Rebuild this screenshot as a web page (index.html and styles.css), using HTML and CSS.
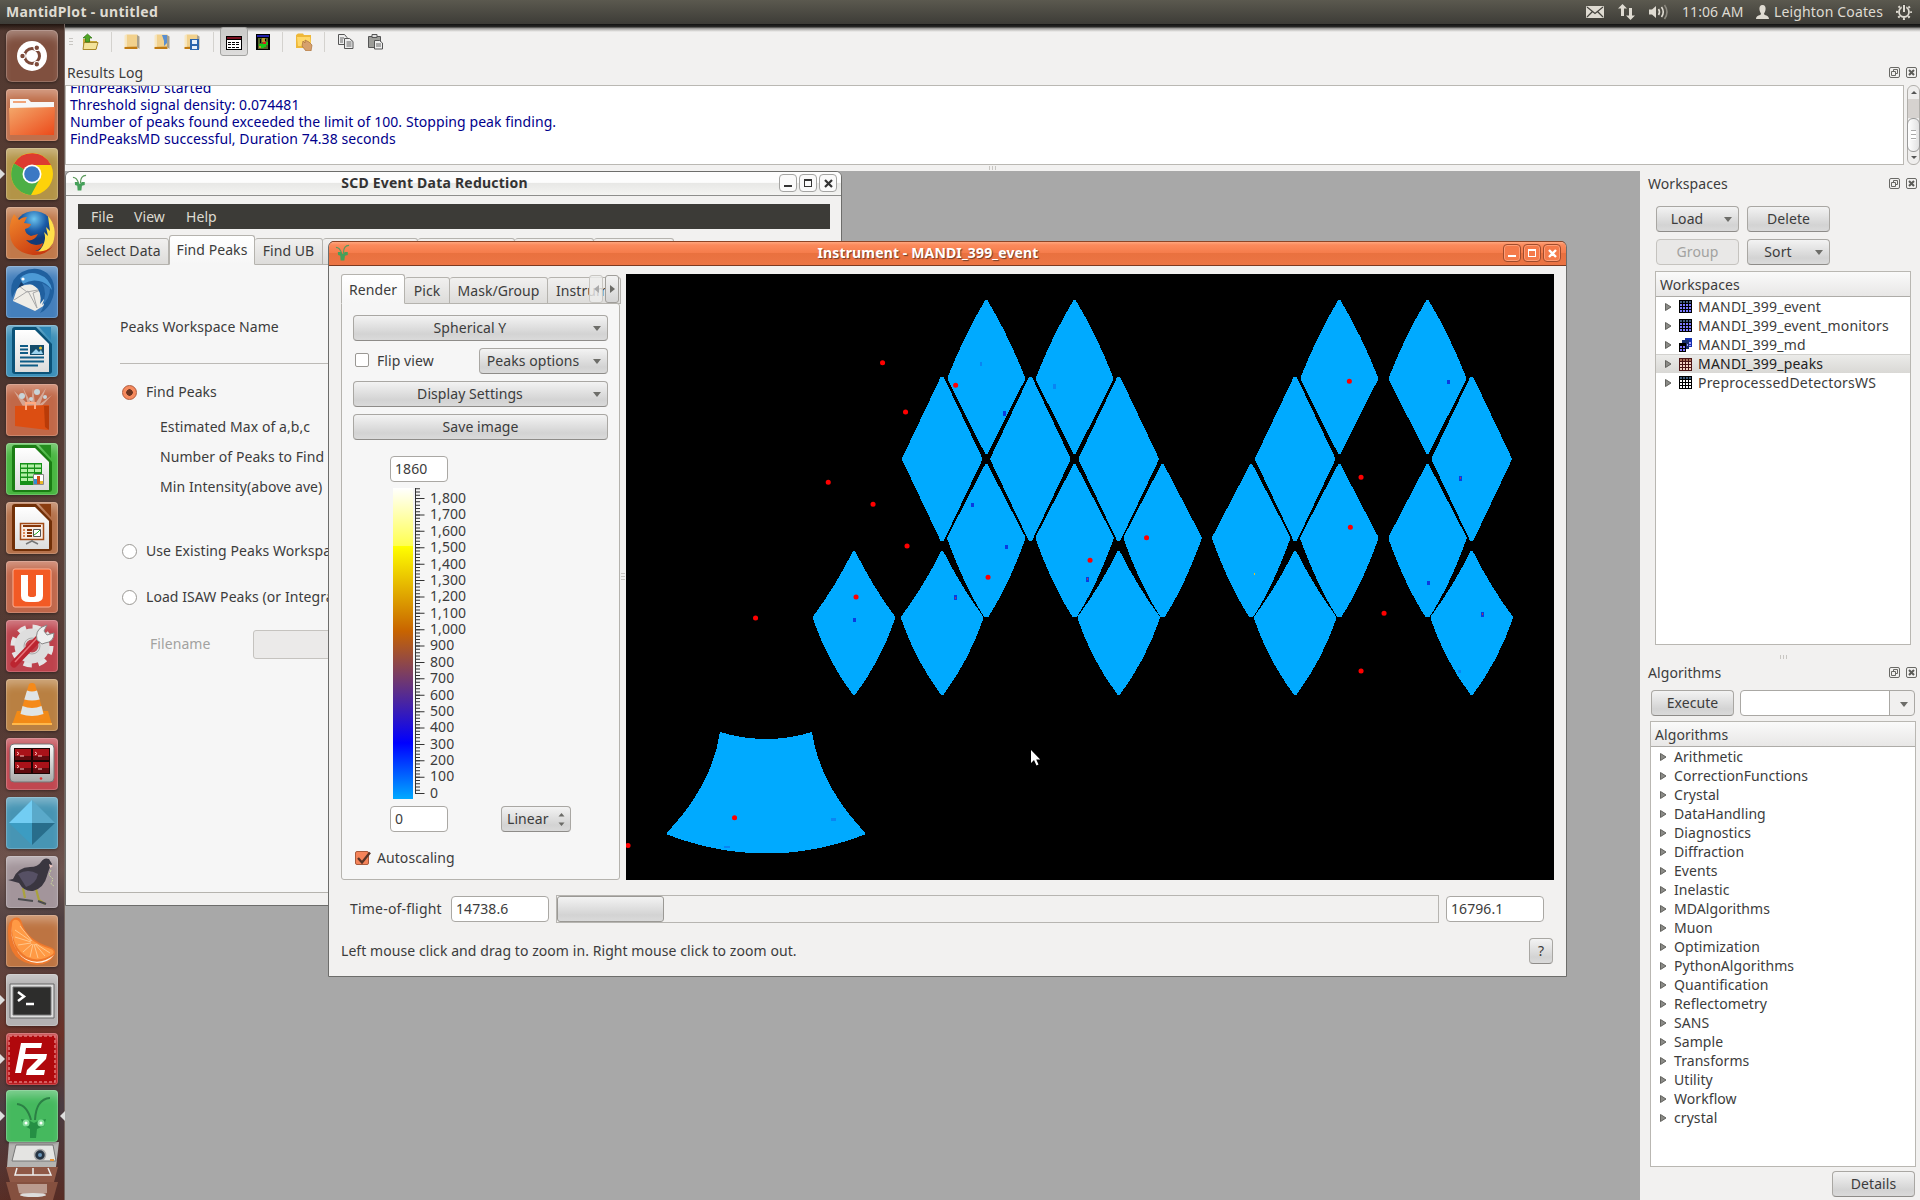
FILE: index.html
```html
<!DOCTYPE html>
<html lang="en">
<head>
<meta charset="utf-8">
<title>MantidPlot - untitled</title>
<link rel="stylesheet" href="styles.css">
</head>
<body>
<svg class="defs" width="0" height="0">
  <defs>
    <symbol id="mantis" viewBox="0 0 16 18"><path d="M1 3Q5 3 7 9M15 0.800Q9 1 9 9" fill="none" stroke="#5c9a5c" stroke-width="1.300"/><path d="M3 8h3l2.300 2 2.300-2h3v3l-3 1-.6 5h-4l-.4-5-2.300-1z" fill="#45a05a"/></symbol>
    <symbol id="float" viewBox="0 0 11 11"><rect x=".5" y=".5" width="10" height="10" rx="1.500" fill="none" stroke="#696965"/><path d="M4.500 4.500v-2h4v4h-2M2.500 4.500h4v4h-4z" fill="none" stroke="#696965"/></symbol>
    <symbol id="close" viewBox="0 0 11 11"><rect x=".5" y=".5" width="10" height="10" rx="1.500" fill="none" stroke="#696965"/><path d="M3 3l5 5M8 3l-5 5" stroke="#5b5b57" stroke-width="2"/></symbol>
    <symbol id="tri" viewBox="0 0 7 8"><path d="M.5.500L6 4 .5 7.500z" fill="#8b8b87" stroke="#62625e"/></symbol>
    <symbol id="grid" viewBox="0 0 13 13"><path d="M0 0h13v13H0z"/><path d="M1 1h2v2H1zM4 1h2v2H4zM7 1h2v2H7zM10 1h2v2h-2z" fill="#445f80"/><path d="M1 4h2v2H1zM4 4h2v2H4zM7 4h2v2H7zM10 4h2v2h-2zM1 7h2v2H1zM4 7h2v2H4zM7 7h2v2H7zM10 7h2v2h-2zM1 10h2v2H1zM4 10h2v2H4zM7 10h2v2H7zM10 10h2v2h-2z" fill="currentColor"/></symbol>
    <symbol id="gridred" viewBox="0 0 13 13"><path d="M0 0h13v13H0z" fill="#4a1414"/><path d="M1 1h2v2H1zM4 1h2v2H4zM7 1h2v2H7zM10 1h2v2h-2z" fill="#a87058"/><path d="M1 4h2v2H1zM4 4h2v2H4zM7 4h2v2H7zM10 4h2v2h-2zM1 7h2v2H1zM4 7h2v2H4zM7 7h2v2H7zM10 7h2v2h-2zM1 10h2v2H1zM4 10h2v2H4zM7 10h2v2H7zM10 10h2v2h-2z" fill="#f5d5c5"/></symbol>
    <symbol id="book" viewBox="0 0 18 18"><path d="M3.500 1.500h11v12l-11 1z" fill="#f2d18c"/><path d="M1.500 2.500l2-1.500v13l-2 .5z" fill="#f8e8c0"/><path d="M1.500 14l13-.5v2.500h-13z" fill="#c07a12"/><path d="M14 2l2.500 1.500V16L14 14z" fill="#a8a08c"/></symbol>
    <linearGradient id="docw" x2="0" y2="1"><stop stop-color="#fff"/><stop offset="1" stop-color="#dcdcdc"/></linearGradient>
    <linearGradient id="orange" x2="1" y2="1"><stop stop-color="#f3a86b"/><stop offset="1" stop-color="#ec4a1a"/></linearGradient>
    <linearGradient id="silver" x2="0" y2="1"><stop stop-color="#fafafa"/><stop offset="1" stop-color="#a9a9a9"/></linearGradient>
    <linearGradient id="fox" x2=".7" y2="1"><stop stop-color="#f28a2c"/><stop offset="1" stop-color="#c8380f"/></linearGradient>
    <radialGradient id="globe" cx=".5" cy=".2"><stop stop-color="#6cc4ee"/><stop offset=".6" stop-color="#1c5da8"/><stop offset="1" stop-color="#123a78"/></radialGradient>
  </defs>
</svg>

<div class="desktop">
  <header class="panel">
    <span class="panel-title">MantidPlot - untitled</span>
    <div class="indicators">
      <svg class="i-mail" width="18" height="12" viewBox="0 0 18 12"><rect width="18" height="12" rx="1" fill="#dfdbd2"/><path d="M1 1l8 6.500L17 1M1 11l5.500-5.500M17 11l-5.500-5.500" fill="none" stroke="#45443e" stroke-width="1.200"/></svg>
      <svg class="i-net" width="17" height="16" viewBox="0 0 17 16"><path d="M4.500 0L9 4.500H6V12H3V4.500H0zM12.500 16L8 11.500h3V4h3v7.500h3z" fill="#dfdbd2"/></svg>
      <svg class="i-vol" width="20" height="16" viewBox="0 0 20 16"><path d="M0 5.500h3L7 2v12l-4-3.500H0z" fill="#dfdbd2"/><path d="M9.500 5q2 3 0 6M12.500 3q3.500 5 0 10" fill="none" stroke="#dfdbd2" stroke-width="1.600"/><path d="M15.500 1q5 7 0 14" fill="none" stroke="#8b887f" stroke-width="1.600"/></svg>
      <span class="clock">11:06 AM</span>
      <svg class="i-user" width="13" height="14" viewBox="0 0 13 14"><path d="M6.500 0C9 0 10 2 9.500 5 9.200 7 8 8 8 9c0 1.500 5 1 5 5H0c0-4 5-3.500 5-5C5 8 3.800 7 3.500 5 3 2 4 0 6.500 0z" fill="#dfdbd2"/></svg>
      <span class="user">Leighton Coates</span>
      <svg class="i-gear" width="16" height="16" viewBox="0 0 16 16"><circle cx="8" cy="8" r="5" fill="none" stroke="#dfdbd2" stroke-width="1.800"/><circle cx="8" cy="8" r="7" fill="none" stroke="#dfdbd2" stroke-width="2" stroke-dasharray="2 3.500" stroke-dashoffset="1"/><path d="M5.800 0h4.400v7H5.800z" fill="#4a4942"/><path d="M7 1h2v7H7z" fill="#dfdbd2"/></svg>
    </div>
  </header>

  <div class="body">
    <nav class="launcher">
      <div class="tile t-ubuntu"><svg viewBox="0 0 52 52"><circle cx="26" cy="26" r="15" fill="#fff"/><circle cx="26" cy="26" r="7.500" fill="none" stroke="#7c4a3a" stroke-width="3"/><g fill="#7c4a3a" stroke="#fff" stroke-width="1.200"><circle cx="16.500" cy="26" r="2.800"/><circle cx="30.800" cy="17.700" r="2.800"/><circle cx="30.800" cy="34.300" r="2.800"/></g></svg></div>
      <div class="tile t-files"><svg viewBox="0 0 52 52"><path d="M4 10h18l3 3h23v7H4z" fill="#f7f7f7"/><path d="M7 12h13v2H7z" fill="#f0a478"/><path d="M3 19l46-1-1 28H4z" fill="url(#orange)"/></svg></div>
      <div class="tile t-chrome"><svg viewBox="0 0 52 52"><circle cx="26" cy="26" r="21" fill="#fdd20a"/><path d="M26 26L8 15.500A21 21 0 0 1 45 17H26z" fill="#dd3a30"/><path d="M8 15.500A21 21 0 0 0 25 47l9-16.500-8-4.500z" fill="#4caf45"/><circle cx="26" cy="26" r="9.500" fill="#fff"/><circle cx="26" cy="26" r="7.800" fill="#3b78c4"/></svg><i class="pip"></i></div>
      <div class="tile t-firefox"><svg viewBox="0 0 52 52"><circle cx="28" cy="24" r="20" fill="url(#globe)"/><path d="M42 9Q52 20 47 36 40 47 30 47 42 36 38 25l4 4-2-9 4 4z" fill="#ffdf4a"/><path d="M8 7l5 6q3-3 8-3l-3 6 7 1q-1 4-6 5 0 5 6 7l7-2q-4 8-12 6 8 8 17 3-1 6-8 8 10 2 18-5-8 10-20 9Q10 46 5 33 1 19 8 7z" fill="url(#fox)"/></svg></div>
      <div class="tile t-bird"><svg viewBox="0 0 52 52"><path d="M12 20l-5 15 22 10 15-9-9-19z" fill="#efede7"/><path d="M8 34l14-9 9 17-4-15 10-4-16 3-8-6" fill="none" stroke="#a8a8a8"/><path d="M6 32Q2 14 16 6 30-1 41 7q10 9 6 24-4 12-13 16 5-7 4-14l-4 5q2-9-2-15-6-6-13-5-9 3-13 14z" fill="#20609f"/><path d="M14 12q8-7 18-4 12 4 14 16-6-8-13-9-8-2-16 3z" fill="#4c9ad6"/><path d="M36 17q6 10 0 22 8-6 8-17z" fill="#3578b8"/><circle cx="17" cy="13" r="1.600" fill="#fff"/><path d="M12 22l3-6 3 3z" fill="#163b66"/></svg></div>
      <div class="tile t-writer"><svg viewBox="0 0 52 52"><path d="M6 5q0-3 3-3h21l16 17v27q0 3-3 3H9q-3 0-3-3z" fill="#0b5278"/><path d="M33 2h12v13z" fill="#2e86b5"/><path d="M9 5h20l14 14v28H9z" fill="url(#docw)"/><path d="M14 21h8M14 24.500h8M14 28h8M14 32.500h24M14 36.500h24M14 40.500h18" stroke="#0f5c86" stroke-width="2"/><path d="M24 20h14v10H24z" fill="#134c6b"/><path d="M25 29l5-5 3 3 2-2 2 4z" fill="#9cd2ee"/><circle cx="34.500" cy="23" r="1.500" fill="#ecc234"/></svg></div>
      <div class="tile t-soft"><svg viewBox="0 0 52 52"><path d="M8 7l14 13L17 4l8 15 2-15 2 16L40 4l-6 16 12-9-12 13H18z" fill="#e4cfc4" opacity=".6"/><g fill="#c8d4d8"><circle cx="16" cy="12" r="3"/><circle cx="31" cy="8" r="3"/><circle cx="25" cy="15" r="2"/><circle cx="39" cy="13" r="2"/></g><path d="M9 22l34-1-1 25-33-4z" fill="#dc4e12"/><path d="M38 22h5v24l-4-3z" fill="#b93b08"/><path d="M20 26v-7h9v6" fill="none" stroke="#ffa880" stroke-width="2"/></svg></div>
      <div class="tile t-calc"><svg viewBox="0 0 52 52"><path d="M6 5q0-3 3-3h21l16 17v27q0 3-3 3H9q-3 0-3-3z" fill="#1b7d14"/><path d="M33 2h12v13z" fill="#258d1e"/><path d="M9 5h20l14 14v28H9z" fill="url(#docw)"/><path d="M14 20h22v22H14z" fill="#159018"/><path d="M15 21.500h6v3h-6zm7 0h6v3h-6zm7 0h6v3h-6zM15 26h6v3h-6zm7 0h6v3h-6zm7 0h6v3h-6zM15 30.500h6v3h-6zm7 0h6v3h-6zM15 35h6v3h-6zm7 0h6v3h-6z" fill="#b3efa6"/><path d="M27.500 31.500h10v10h-10z" fill="#fff" stroke="#888"/><path d="M28 36h3v5h-3z" fill="#318bd3"/><path d="M31 33h3v8h-3z" fill="#cf4f19"/><path d="M34 38h3v3h-3z" fill="#e8b92a"/></svg></div>
      <div class="tile t-impress"><svg viewBox="0 0 52 52"><path d="M6 5q0-3 3-3h21l16 17v27q0 3-3 3H9q-3 0-3-3z" fill="#713008"/><path d="M33 2h12v13z" fill="#8b3d10"/><path d="M9 5h20l14 14v28H9z" fill="url(#docw)"/><path d="M14.500 21.500h23v16h-23z" fill="#f8ece4" stroke="#a24a16" stroke-width="1.500"/><path d="M17 24h18M21 28h5M21 31h5M21 34h5" stroke="#873608" stroke-width="2"/><path d="M17 28h2M17 31h2M17 34h2" stroke="#dc8a5a" stroke-width="2"/><path d="M27.500 27.500h7v7h-7z" fill="#fff" stroke="#555"/><path d="M28 33l3-2 3-3" stroke="#2a2" fill="none"/><path d="M26 38v1l-6 3M26 39l6 3" stroke="#777" stroke-width="1.500" fill="none"/></svg></div>
      <div class="tile t-one"><svg viewBox="0 0 52 52"><rect x="7" y="8" width="38" height="38" rx="2" fill="#f25a25" stroke="#ffb093"/><path d="M15 14h7v20q0 2 4 2t4-2V14h7v21q0 6-8 6h-6q-8 0-8-6zM22 14v5l-4 2z" fill="#fff"/></svg></div>
      <div class="tile t-set"><svg viewBox="0 0 52 52"><circle cx="26" cy="26" r="18.500" fill="none" stroke="#e4e4e4" stroke-width="6" stroke-dasharray="8 6.530"/><circle cx="26" cy="26" r="12" fill="none" stroke="#dedede" stroke-width="11"/><circle cx="26" cy="26" r="8" fill="none" stroke="#aaa"/><path d="M8 44L33 18" stroke="#bc2530" stroke-width="7" stroke-linecap="round"/><path d="M9 42L32 17" stroke="#e8747a" stroke-width="1.500"/><path d="M31 20q-2-9 5-13l5-2-3 6 3 4 7-2q0 9-9 10l-3 1z" fill="#eee" stroke="#888"/></svg></div>
      <div class="tile t-vlc"><svg viewBox="0 0 52 52"><path d="M11 32h31l4 14H6z" fill="#f28a16"/><path d="M23 5q3-2 6 0l10 34q-13 6-26 0z" fill="#f58a1a"/><path d="M21 11.500q5 2 10 0l2.700 9q-7.700 2-15.400 0zM16.500 27q9.500 4 19 0l2 8q-11.500 4-23 0z" fill="#dfe4e6"/><path d="M6 44h40v2H6z" fill="#ffb84a"/></svg></div>
      <div class="tile t-term"><svg viewBox="0 0 52 52"><rect x="4" y="6" width="44" height="38" rx="4" fill="url(#silver)" stroke="#777"/><path d="M8 10h36v26H8z" fill="#1a0505"/><path d="M9 11h16v11H9zM27 11h16v11H27zM9 24h16v11H9zM27 24h16v11H27z" fill="#a91219"/><path d="M9 18h16v4H9zM27 18h16v4H27zM9 30h16v5H9zM27 30h16v5H27z" fill="#600a0e"/><path d="M11 14l2 1.500-2 1.500M14 18h4M29 14l2 1.500-2 1.500M32 18h4M11 27l2 1.500-2 1.500M14 31h4M29 27l2 1.500-2 1.500M32 31h4" fill="none" stroke="#ffc0c0"/><circle cx="35" cy="40.500" r="1.300" fill="#e03030"/></svg></div>
      <div class="tile t-octa"><svg viewBox="0 0 52 52"><path d="M26 3v23H3z" fill="#72cdf3"/><path d="M26 3l23 23H26z" fill="#5aa9ca"/><path d="M3 26h23v22z" fill="#3c9cc2"/><path d="M26 26h23L26 48z" fill="#286d8b"/></svg></div>
      <div class="tile t-coot"><svg viewBox="0 0 52 52"><path d="M17 32l2 10m11-9l3 11 6 4" stroke="#aaa23d" stroke-width="2.200" fill="none"/><path d="M12 43l15 2m5 0l8 3" stroke="#4c4c50" stroke-width="2"/><path d="M2 24l5-1Q12 11 24 11q8 0 11-5 3-5 8-3l3 5q-3 4-5 12-3 12-14 15-9 1-14-8z" fill="#3a3640"/><path d="M12 18q10-6 20 0-2 10-12 13z" fill="#565064"/><path d="M43 8l4 2-3 2z" fill="#f0c8c0"/><path d="M45 14l-2 5 4 4-2 5 3 2" stroke="#c6d19b" stroke-dasharray="2 1" fill="none"/></svg></div>
      <div class="tile t-clem"><svg viewBox="0 0 52 52"><path d="M8 3q6-2 8 5 5 17 28 24 6 2 5 7-5 11-18 11Q2 48 2 16 2 6 8 3z" fill="#ee782c"/><path d="M5 10q0 26 15 34 14 7 28-4-6 8-17 8Q6 46 5 10z" fill="#fff0de"/><path d="M8 5q5-1 7 5 6 17 30 24 4 2 2 5-13 9-26 3Q5 32 6 9q0-3 2-4z" fill="#ff9a45"/><path d="M26 26L14 11M25 26L9 15M25 27L9 22M25 28l-13 2M26 29l-9 8M27 29l-3 13M28 29l4 14M29 29l10 12M30 29l14 9" stroke="#ffc78c" stroke-width="1"/></svg></div>
      <div class="tile t-xterm"><svg viewBox="0 0 52 52"><path d="M4 10h44v34H4z" fill="#dedede" stroke="#666"/><path d="M7 13h38v28H7z" fill="#2d2d2c" stroke="#777"/><path d="M12 18l6 4.500-6 4.500M20 30h8" fill="none" stroke="#fff" stroke-width="2.500"/></svg><i class="pip"></i></div>
      <div class="tile t-fz"><svg viewBox="0 0 52 52"><rect x="3" y="3" width="46" height="46" fill="#b0080c" stroke="#df7777" stroke-dasharray="3 2" stroke-width="1.500"/><path d="M15 10h21l-1 5H20l-1 6h9l-1 5h-9l-3 14H9zM23 21h18l-1 5-11 11h10l-1 5H20l1-5 11-11H22z" fill="#fff"/></svg><i class="pip"></i></div>
      <div class="tile t-mantid"><svg viewBox="0 0 52 52"><path d="M11 14q10 1 14 16M44 8q-14 1-15 22" fill="none" stroke="#2b8045" stroke-width="2"/><path d="M15 29l9 2 4 2 4-2 8-2-2 7-7 3-1 9h-6v-9l-7-4z" fill="#258f44"/><circle cx="20" cy="33" r="3.500" fill="#83dd98"/><circle cx="35" cy="33" r="3.500" fill="#83dd98"/><circle cx="20" cy="33" r="1.500" fill="#fff"/><circle cx="35" cy="33" r="1.500" fill="#fff"/></svg><i class="pip"></i><i class="pip focus"></i></div>
      <svg class="stack" width="56" height="58" viewBox="0 0 56 58"><path d="M4 0h50l-3 25H2z" fill="#b5b4b2"/><path d="M11 3h37l3 16H7z" fill="#e4e4e2" stroke="#777"/><circle cx="35" cy="13" r="5.500" fill="#263443" stroke="#aaa" stroke-width="1.500"/><circle cx="35" cy="13" r="2" fill="#6894b9"/><path d="M45 17h4v2h-4z" fill="#e89534"/><path d="M1 25h52l-4 15H5z" fill="#8f5846"/><path d="M12 26l-2 7h36l-3-7M28 26v7" fill="none" stroke="#eee" stroke-width="1.500"/><path d="M1 40h52l-5 18H6z" fill="#85503f"/><path d="M12 42h30v9q-15 5-28 0z" fill="#ba9b8f"/><ellipse cx="28" cy="53" rx="13" ry="2" fill="#ddd"/></svg>
    </nav>

    <main class="app">
      <div class="toolbar">
        <i class="grip"></i>
        <svg class="tb tb-open" width="18" height="18" viewBox="0 0 18 18"><path d="M2 6h6l1.500 2H16v8H2z" fill="#c9a93c"/><path d="M3 9.500h14l-2 7H2z" fill="#f3e39a" stroke="#a98a2c"/><path d="M6.500 1L11 5H8.500v4H4.500V5H2z" fill="#4fa524" stroke="#2f7412" stroke-width=".7"/></svg>
        <i class="sep"></i>
        <svg class="tb tb-b1" width="18" height="18"><use href="#book"/></svg>
        <svg class="tb tb-b2" width="18" height="18"><use href="#book"/><path d="M9 2h5v8l-3 3v-5z" fill="#5a8fd0"/></svg>
        <svg class="tb tb-b3" width="18" height="18"><use href="#book"/><path d="M7 6h9v11H7z" fill="#2b64ad"/><path d="M9 7h5v4H9zM9 13h5v3H9z" fill="#e7effa"/></svg>
        <i class="sep"></i>
        <span class="tb-active"><svg width="16" height="14" viewBox="0 0 16 14" shape-rendering="crispEdges"><path d="M0 0h16v14H0z"/><path d="M1 1h14v2H1z" fill="#7a1020"/><path d="M1 4h14v9H1z" fill="#fff"/><path d="M2 6.500h12M2 8.500h12M2 11.500h12" stroke="#000" stroke-dasharray="3 1"/></svg></span>
        <svg class="tb-img" width="14" height="16" viewBox="0 0 14 16" shape-rendering="crispEdges"><path d="M0 0h14v16H0z"/><path d="M1 1h12v2H1z" fill="#2020a8"/><path d="M2 4h10v11H2z" fill="#56642a"/><path d="M3 10h4V8h5v3h-2v2H8v1H4v-1H3z" fill="#18c818"/><path d="M6 4h3v4H6zM3 12h2v2H3z" fill="#b8982c"/><path d="M7 8h3v2H7z" fill="#d82020"/><path d="M4 5h1v4H4zM9 5h1v2H9z"/></svg>
        <i class="sep"></i>
        <svg class="tb tb-hand" width="18" height="18" viewBox="0 0 18 18"><path d="M1 2l2-1.500h5L9 2h7v13H1z" fill="#eeb83a"/><path d="M2 4h13l1 9H3z" fill="#ffd869"/><path d="M8 8l2 2V7l4 2 3 3-1 6h-5l-4-5z" fill="#d6a06c" stroke="#a8713e" stroke-width=".7"/></svg>
        <i class="sep"></i>
        <svg class="tb tb-copy" width="16" height="15" viewBox="0 0 16 15"><path d="M.5.500h6l2.500 3v7H.5z" fill="#eee" stroke="#555"/><path d="M6.500 4.500h5l3.500 3v7H6.500z" fill="#eee" stroke="#555"/><path d="M2 4h4M2 6h3M2 8h3M8.500 8h5M8.500 10h5M8.500 12h5" stroke="#666"/></svg>
        <svg class="tb tb-paste" width="16" height="16" viewBox="0 0 16 16"><path d="M.5 2.500h12v11H.5z" fill="#9c9c98" stroke="#555"/><path d="M4 .5h5v3H4z" fill="#ddd" stroke="#555"/><path d="M6.500 6.500h5l3 2.500v6h-8z" fill="#eee" stroke="#555"/><path d="M8 10h5M8 12h5" stroke="#666"/></svg>
      </div>

      <div class="dock-title log-title"><span>Results Log</span><svg width="11" height="11"><use href="#float"/></svg><svg width="11" height="11"><use href="#close"/></svg></div>
      <div class="log-row">
        <div class="log"><p>FindPeaksMD started</p><p>Threshold signal density: 0.074481</p><p>Number of peaks found exceeded the limit of 100. Stopping peak finding.</p><p>FindPeaksMD successful, Duration 74.38 seconds</p></div>
        <div class="scroll"><i class="up"></i><i class="trough"></i><i class="thumb"></i><i class="down"></i></div>
      </div>
      <div class="split-h"><i class="dots-h"></i></div>

      <div class="work">
        <div class="mdi">
          <section class="win scd">
            <div class="titlebar"><svg class="m" width="15" height="18"><use href="#mantis"/></svg><b class="wt">SCD Event Data Reduction</b><span class="wb"><i class="min"></i></span><span class="wb"><i class="max"></i></span><span class="wb"><svg width="9" height="9" viewBox="0 0 9 9"><path d="M1 1l7 7M8 1L1 8" stroke="currentColor" stroke-width="2.200"/></svg></span></div>
            <div class="menubar"><span>File</span><span>View</span><span>Help</span></div>
            <div class="tabs scd-tabs"><span class="tab w1">Select Data</span><span class="tab on w2">Find Peaks</span><span class="tab w3">Find UB</span><span class="tab w4"></span><span class="tab w5"></span><span class="tab w6"></span><span class="tab w7"></span></div>
            <div class="page scd-page">
              <div class="peaks-name">Peaks Workspace Name</div>
              <div class="row r1"><i class="radio on"></i>Find Peaks</div>
              <div class="row ind">Estimated Max of a,b,c</div>
              <div class="row ind">Number of Peaks to Find</div>
              <div class="row ind">Min Intensity(above ave)</div>
              <div class="row r2"><i class="radio"></i>Use Existing Peaks Workspace</div>
              <div class="row r3"><i class="radio"></i>Load ISAW Peaks (or Integrated)</div>
              <div class="row r4"><span>Filename</span><i class="disabled-field"></i></div>
            </div>
          </section>

          <section class="win inst">
            <div class="titlebar hot"><svg class="m" width="15" height="18"><use href="#mantis"/></svg><b class="wt">Instrument - MANDI_399_event</b><span class="wb"><i class="min"></i></span><span class="wb"><i class="max"></i></span><span class="wb"><svg width="9" height="9" viewBox="0 0 9 9"><path d="M1 1l7 7M8 1L1 8" stroke="currentColor" stroke-width="2.400"/></svg></span></div>
            <div class="inst-main">
              <div class="controls">
                <div class="tabs inst-tabs"><span class="tab on x1">Render</span><span class="tab x2">Pick</span><span class="tab x3">Mask/Group</span><span class="tab x4">Instrum</span><span class="arrows"><b class="arr off"><i></i></b><b class="arr"><i></i></b></span></div>
                <div class="page render">
                  <div class="btn menu wide">Spherical Y</div>
                  <div class="flip"><i class="check"></i><span>Flip view</span><div class="btn menu">Peaks options</div></div>
                  <div class="btn menu wide">Display Settings</div>
                  <div class="btn wide">Save image</div>
                  <div class="field f-max">1860</div>
                  <div class="scale">
                    <i class="colorbar"></i>
                    <svg width="12" height="311" viewBox="0 0 12 311"><path d="M2.500 0v306" stroke="#333"/><path d="M4.500 306.100V0" stroke="#333" stroke-width="5" stroke-dasharray="1 2.278"/><path d="M7 306.100V0" stroke="#333" stroke-width="9" stroke-dasharray="1 15.390"/></svg>
                    <div class="nums"><span>1,800</span><span>1,700</span><span>1,600</span><span>1,500</span><span>1,400</span><span>1,300</span><span>1,200</span><span>1,100</span><span>1,000</span><span>900</span><span>800</span><span>700</span><span>600</span><span>500</span><span>400</span><span>300</span><span>200</span><span>100</span><span>0</span></div>
                  </div>
                  <div class="lowrow"><div class="field">0</div><div class="btn linear">Linear<svg width="7" height="13" viewBox="0 0 7 13"><path d="M.5 3.500L3.500 0l3 3.500zM.5 9.500l3 3.500 3-3.500z" fill="#6b6b67"/></svg></div></div>
                  <div class="auto"><i class="check on"><svg width="18" height="16" viewBox="0 0 18 16"><path d="M3 7l4 4.500 8-10" fill="none" stroke="#5a3426" stroke-width="2.400"/></svg></i><span>Autoscaling</span></div>
                </div>
              </div>
              <div class="split-v"><i class="dots-v"></i></div>
              <svg class="view" width="928" height="606" viewBox="626 274 928 606" shape-rendering="crispEdges">
                <defs>
                  <path id="ra" d="M-1 0h2Q22 35 38.500 77V80L1 154h-2L-38.500 80V77Q-22 35-1 0z"/>
                  <path id="rb" d="M-1.500 0h3L40 81V83L1.500 164h-3L-40 83V81z"/>
                  <path id="rc" d="M-1 0h2L39 73V75Q22 122 2 153h-4Q-22 122-39 75V73z"/>
                  <path id="rd" d="M-1 0h2Q19 36 41 65.500V68Q27 109 1 144h-2Q-27 109-41 68V65.500Q-19 36-1 0z"/>
                </defs>
                <path d="M626 274h928v606H626z"/>
                <g fill="#0af">
                  <use href="#ra" x="986.300" y="300"/><use href="#ra" x="1074.600" y="300"/><use href="#ra" x="1339.300" y="300"/><use href="#ra" x="1427.500" y="300"/>
                  <use href="#rb" x="942.200" y="377"/><use href="#rb" x="1030.400" y="377"/><use href="#rb" x="1118.700" y="377"/><use href="#rb" x="1295.200" y="377"/><use href="#rb" x="1471.700" y="377"/>
                  <use href="#rc" x="986.300" y="464"/><use href="#rc" x="1074.600" y="464"/><use href="#rc" x="1162.600" y="464"/><use href="#rc" x="1251.200" y="464"/><use href="#rc" x="1339.300" y="464"/><use href="#rc" x="1427.500" y="464"/>
                  <use href="#rd" x="854" y="551"/><use href="#rd" x="942.200" y="551"/><use href="#rd" x="1118.700" y="551"/><use href="#rd" x="1295.200" y="551"/><use href="#rd" x="1471.700" y="551"/>
                  <path d="M720 732q46 14 92 0Q820 785 865 832.500v2q-98 38-198 0v-2Q712 785 720 732z"/>
                </g>
                <g fill="none" stroke-width="2.500">
                  <path stroke="#0a84f2" d="M981 362v4M1054.500 384v5M1459.500 670v3M831 819.500h5M724 847h6"/>
                  <path stroke="#0a3be0" d="M1004.500 411v5M972.500 503v4M1006.500 545v4M1087.500 577v5M955.500 595v5M854.500 618v4M1448.500 380v4M1460.500 476v5M1428.500 581v4M1482.500 612v5"/>
                  <path stroke="#a04050" stroke-width="1" d="M955.500 597v2M1087.500 578v2M1460.500 477v2M1482.500 613v2"/>
                  <path stroke="#f2c21a" stroke-width="1.500" d="M1254.500 573v2"/>
                </g>
                <g stroke="red" stroke-width="5" stroke-linecap="round" shape-rendering="auto">
                  <path d="M882.500 362.700h.1M905.500 412h.1M955.600 385.300h.1M828.200 482.300h.1M873 504.300h.1M907 546h.1M856 597h.1M755.500 618h.1M988 577.300h.1M1090 560.300h.1M1146.500 537.700h.1M1349.300 381.300h.1M1361 477.300h.1M1350.300 527.300h.1M1384 613.300h.1M1361 671h.1M734.500 817.700h.1M628 845.500h.1"/>
                </g>
                <path d="M1031 750v13l3-3 2.500 5.500 2-1-2.300-5h4z" fill="#fff" shape-rendering="auto"/>
              </svg>
            </div>
            <div class="tof"><span>Time-of-flight</span><div class="field">14738.6</div><div class="slider"><i></i></div><div class="field">16796.1</div></div>
            <div class="hint"><span>Left mouse click and drag to zoom in. Right mouse click to zoom out.</span><div class="btn help">?</div></div>
          </section>
        </div>

        <aside class="docks">
          <div class="dock-title"><span>Workspaces</span><svg width="11" height="11"><use href="#float"/></svg><svg width="11" height="11"><use href="#close"/></svg></div>
          <div class="wsbtns"><div class="btn menu">Load</div><div class="btn">Delete</div><div class="btn dis">Group</div><div class="btn menu">Sort</div></div>
          <div class="tree ws">
            <div class="th">Workspaces</div>
            <div class="tr"><svg class="tg" width="7" height="8"><use href="#tri"/></svg><svg class="gi blue" width="13" height="13"><use href="#grid"/></svg>MANDI_399_event</div>
            <div class="tr"><svg class="tg" width="7" height="8"><use href="#tri"/></svg><svg class="gi blue" width="13" height="13"><use href="#grid"/></svg>MANDI_399_event_monitors</div>
            <div class="tr"><svg class="tg" width="7" height="8"><use href="#tri"/></svg><svg class="gi" width="13" height="14" viewBox="0 0 13 14"><path d="M6 0h7v9H6z" fill="#1530b0"/><path d="M7 4h2v2H7zM10 4h2v2h-2zM10 7h2v1h-2z" fill="#a8a0ff"/><path d="M3 2h7v9H3z" fill="#1a3070"/><path d="M0 5h7v9H0z"/><path d="M1 8h2v2H1zM4 8h2v2H4zM1 11h2v2H1zM4 11h2v2H4z" fill="#8078ff"/><path d="M8 6h1v2H8z" fill="#a8a0ff"/></svg>MANDI_399_md</div>
            <div class="tr sel"><svg class="tg" width="7" height="8"><use href="#tri"/></svg><svg class="gi" width="13" height="13"><use href="#gridred"/></svg>MANDI_399_peaks</div>
            <div class="tr"><svg class="tg" width="7" height="8"><use href="#tri"/></svg><svg class="gi white" width="13" height="13"><use href="#grid"/></svg>PreprocessedDetectorsWS</div>
          </div>
          <div class="dock-split"><i class="dots-h"></i></div>
          <div class="dock-title alg-title"><span>Algorithms</span><svg width="11" height="11"><use href="#float"/></svg><svg width="11" height="11"><use href="#close"/></svg></div>
          <div class="exec"><div class="btn">Execute</div><div class="combo"><i></i></div></div>
          <div class="tree alg">
            <div class="th">Algorithms</div>
            <div class="tr"><svg class="tg" width="7" height="8"><use href="#tri"/></svg>Arithmetic</div>
            <div class="tr"><svg class="tg" width="7" height="8"><use href="#tri"/></svg>CorrectionFunctions</div>
            <div class="tr"><svg class="tg" width="7" height="8"><use href="#tri"/></svg>Crystal</div>
            <div class="tr"><svg class="tg" width="7" height="8"><use href="#tri"/></svg>DataHandling</div>
            <div class="tr"><svg class="tg" width="7" height="8"><use href="#tri"/></svg>Diagnostics</div>
            <div class="tr"><svg class="tg" width="7" height="8"><use href="#tri"/></svg>Diffraction</div>
            <div class="tr"><svg class="tg" width="7" height="8"><use href="#tri"/></svg>Events</div>
            <div class="tr"><svg class="tg" width="7" height="8"><use href="#tri"/></svg>Inelastic</div>
            <div class="tr"><svg class="tg" width="7" height="8"><use href="#tri"/></svg>MDAlgorithms</div>
            <div class="tr"><svg class="tg" width="7" height="8"><use href="#tri"/></svg>Muon</div>
            <div class="tr"><svg class="tg" width="7" height="8"><use href="#tri"/></svg>Optimization</div>
            <div class="tr"><svg class="tg" width="7" height="8"><use href="#tri"/></svg>PythonAlgorithms</div>
            <div class="tr"><svg class="tg" width="7" height="8"><use href="#tri"/></svg>Quantification</div>
            <div class="tr"><svg class="tg" width="7" height="8"><use href="#tri"/></svg>Reflectometry</div>
            <div class="tr"><svg class="tg" width="7" height="8"><use href="#tri"/></svg>SANS</div>
            <div class="tr"><svg class="tg" width="7" height="8"><use href="#tri"/></svg>Sample</div>
            <div class="tr"><svg class="tg" width="7" height="8"><use href="#tri"/></svg>Transforms</div>
            <div class="tr"><svg class="tg" width="7" height="8"><use href="#tri"/></svg>Utility</div>
            <div class="tr"><svg class="tg" width="7" height="8"><use href="#tri"/></svg>Workflow</div>
            <div class="tr"><svg class="tg" width="7" height="8"><use href="#tri"/></svg>crystal</div>
          </div>
          <div class="btn details">Details</div>
        </aside>
      </div>
    </main>
  </div>
</div>
</body>
</html>
```
FILE: styles.css
```css
* { box-sizing: border-box; }
body { margin: 0; font: 14px/18px "Noto Sans", "Open Sans", sans-serif; letter-spacing: .07px; color: #3c3c3c; }
p { margin: 0; }
i, b { display: block; font-style: normal; }
svg { display: block; flex: none; }
.defs { position: absolute; }
.desktop { width: 1920px; height: 1200px; overflow: hidden; display: flex; flex-direction: column; background: #f2f1f0; white-space: nowrap; }

/* top panel */
.panel { height: 24px; flex: none; display: flex; align-items: center; justify-content: space-between; padding: 0 8px 0 6px; color: #dfdbd2; background: linear-gradient(#5b594f, #3d3c37); }
.panel-title { font-weight: 700; letter-spacing: .33px; }
.indicators { display: flex; align-items: center; }
.i-net { margin-left: 14px; }
.i-vol { margin-left: 14px; }
.clock { margin-left: 13px; width: 62px; }
.i-user { margin-left: 12px; }
.user { margin-left: 5px; width: 109px; letter-spacing: .15px; }
.i-gear { margin-left: 13px; }
.body { flex: 1; display: flex; min-height: 0; }

/* launcher */
.launcher { width: 65px; flex: none; padding: 6px 0 0 6px; display: flex; flex-direction: column; gap: 7px; border-right: 1px solid #74655f;
  background: linear-gradient(#20140f 0, transparent 7px), linear-gradient(100deg, #ffffff00 30%, #7a5a5030 60%, #ffffff00 80%), linear-gradient(#513931 0, #553b32 12%, #47302c 25%, #573e35 42%, #4b342f 58%, #5a3c36 64%, #6e5550 72%, #4f4042 76%, #5e3c36 82%, #6c3027 86%, #4a3c42 92%, #572c24 100%); }
.tile { width: 52px; height: 52px; flex: none; position: relative; border-radius: 4px; background: var(--c); box-shadow: inset 0 0 0 1px #ffffff30, inset 0 9px 9px -3px #ffffff50, 0 1px 3px #0006; }
.tile svg { width: 52px; height: 52px; }
.tile .pip { position: absolute; left: -6px; top: 21px; border: 5px solid transparent; border-left-color: #ddd; border-right: 0; }
.tile .pip.focus { left: 54px; border-right: 5px solid #ddd; border-left: 0; }
.t-ubuntu { --c: #80503f; border-radius: 6px; }
.t-files { --c: #c0704c; }
.t-chrome { --c: #b39447; }
.t-firefox { --c: #c1794a; }
.t-bird { --c: #447fbc; }
.t-writer { --c: #3c8fb8; }
.t-soft { --c: #c16848; }
.t-calc { --c: #48b640; }
.t-impress { --c: #b5714a; }
.t-one { --c: #c0674a; }
.t-set { --c: #bd424c; }
.t-vlc { --c: #b98042; }
.t-term { --c: #c04750; }
.t-octa { --c: #4795b4; }
.t-coot { --c: #a3959b; }
.t-clem { --c: #bd7442; }
.t-xterm { --c: #b3b1b2; }
.t-fz { --c: #b91d20; }
.t-mantid { --c: #45b95e; margin-top: -2px; }
.stack { margin: -7px 0 0 -1px; }

/* main column */
.app { flex: 1; display: flex; flex-direction: column; min-width: 0; }
.toolbar { height: 36px; flex: none; display: flex; align-items: center; padding: 0 0 1px 4px; background: linear-gradient(#111 0, #2a2a28 3px, #8c8b89 4px, #c8c7c5 6px, #f2f1f0 8px); }
.grip { width: 4px; height: 8px; background: repeating-linear-gradient(#c8c6c2 0 1px, transparent 1px 3px); }
.sep { width: 1px; height: 20px; background: #d4d2ce; }
.tb-open { margin: 0 12px 0 8px; }
.tb-b1 { margin-left: 11px; }
.tb-b2 { margin-left: 12px; }
.tb-b3 { margin: 0 12px 0 12px; }
.tb-active { width: 28px; height: 29px; margin-left: 6px; display: grid; place-items: center; padding-top: 3px; border: 1px solid #a3a3a1; border-radius: 3px; background: linear-gradient(#c9c9c7, #dedddc); }
.tb-img { margin: 0 12px 0 8px; }
.tb-hand { margin: 0 11px 0 12px; }
.tb-copy { margin-left: 13px; }
.tb-paste { margin-left: 14px; }
.dock-title { height: 25px; flex: none; display: flex; align-items: center; padding: 0 3px 0 8px; gap: 6px; }
.dock-title span { flex: 1; }
.log-title { padding-left: 2px; }
.log-row { height: 80px; flex: none; display: flex; gap: 3px; }
.log { flex: 1; background: #fff; border: 1px solid #bab8b3; padding-left: 4px; color: #00008b; line-height: 17px; overflow: hidden; display: flex; flex-direction: column; justify-content: flex-end; padding-bottom: 17px; }
.scroll { width: 13px; border: 1px solid #b1afab; border-radius: 6px; background: #efeeed; display: flex; flex-direction: column; align-items: center; }
.up { margin: 5px 0 5px; border: 3px solid transparent; border-bottom-color: #555; border-top: 0; }
.trough { width: 11px; height: 19px; background: #d6d2cf; }
.thumb { width: 13px; height: 34px; border: 1px solid #999; border-radius: 6px; background: repeating-linear-gradient(#aaa 0 1px, #fff 1px 4px) center / 5px 10px no-repeat, linear-gradient(90deg, #fff, #e2e2e2); }
.down { margin-top: 4px; border: 3px solid transparent; border-top-color: #555; border-bottom: 0; }
.split-h { height: 6px; flex: none; display: flex; align-items: center; padding-left: 924px; }
.dots-h { width: 8px; height: 4px; background: repeating-linear-gradient(90deg, #c8c6c2 0 1px, transparent 1px 3px); }
.dots-v { width: 4px; height: 8px; background: repeating-linear-gradient(#c8c6c2 0 1px, transparent 1px 3px); }
.work { flex: 1; display: flex; min-height: 0; }
.mdi { width: 1575px; flex: none; position: relative; background: #a8a8a8; }

/* sub-windows placed on the workspace canvas */
.win { position: absolute; display: flex; flex-direction: column; background: #f2f1f0; border: 1px solid #6d6d6b; border-radius: 6px 6px 0 0; }
.scd { left: 0; top: 0; width: 777px; height: 735px; padding: 0 12px 12px; }
.inst { left: 263px; top: 70px; width: 1239px; height: 736px; padding: 0 12px; }
.titlebar { height: 24px; flex: none; margin: 0 -12px; display: flex; align-items: center; padding: 0 4px 1px 6px; gap: 2px; border-bottom: 1px solid #8e8e8c; border-radius: 5px 5px 0 0; background: linear-gradient(#fdfdfd 0 45%, #e8e8e6 50%, #f4f4f2); color: #333; }
.titlebar .wt { flex: 1; text-align: center; padding-left: 3px; letter-spacing: .22px; }
.hot { color: #fff; background: linear-gradient(#ffa67e 0, #fb8a5c 3px, #f57c4b 48%, #e9713f 50%, #ec7545); border-bottom-color: #7c3a20; box-shadow: 0 -1px 0 #8c4527; padding-right: 5px; }
.hot .wt { text-shadow: 1px 1px 1px #6b3a28; letter-spacing: .14px; }
.wb { width: 18px; height: 18px; display: grid; place-items: center; border: 1px solid #a4a4a2; border-radius: 4px; background: #fafafa; }
.hot .wb { border-color: #a04c2c; background: #f47a4a; box-shadow: inset 0 0 0 1px #ff9d75; }
.min { width: 8px; height: 2px; margin-top: 6px; background: currentColor; }
.max { width: 8px; height: 8px; border: 1px solid; border-top-width: 2px; }
.menubar { height: 25px; flex: none; margin: 8px -1px 0 0; padding-left: 13px; background: #3c3b37; color: #dfdbd2; display: flex; align-items: center; }
.menubar span:nth-child(1) { width: 43px; }
.menubar span:nth-child(2) { width: 52px; }
.tabs { display: flex; align-items: flex-end; flex: none; }
.tab { height: 27px; margin-bottom: -1px; border: 1px solid #b5b3ae; border-left-width: 0; border-radius: 3px 3px 0 0; background: linear-gradient(#f1f0ef, #dddcda); text-align: center; line-height: 24px; overflow: hidden; }
.tab:first-child { border-left-width: 1px; }
.tab.on { height: 30px; line-height: 27px; background: linear-gradient(#fff, #f6f6f6); border-bottom-color: #f6f6f6; border-left-width: 1px; position: relative; z-index: 1; }
.page { background: #f6f6f6; border: 1px solid #b5b3ae; border-radius: 0 3px 3px 3px; flex: 1; }
.scd-tabs { margin-top: 6px; }
.w1 { width: 91px; } .w2 { width: 86px; } .w3 { width: 68px; } .w4 { width: 95px; } .w5 { width: 97px; } .w6 { width: 79px; } .w7 { width: 80px; }
.peaks-name { margin: 0 20px 0 41px; height: 99px; padding-top: 53px; border-bottom: 1px solid #bcbab6; }
.row { height: 30px; display: flex; align-items: center; margin-left: 43px; }
.row.ind { margin-left: 81px; }
.r1 { margin-top: 13px; margin-bottom: 5px; }
.r2 { margin-top: 34px; }
.r3 { margin-top: 16px; }
.r4 { margin: 17px 0 0 71px; color: #a2a2a0; }
.r4 span { width: 103px; }
.disabled-field { width: 300px; height: 29px; border: 1px solid #c5c3bf; border-radius: 3px; background: #ebeae9; }
.radio { width: 15px; height: 15px; margin-right: 9px; border: 1px solid #9a9894; border-radius: 50%; background: #fff; }
.radio.on { border-color: #b0593a; background: radial-gradient(#6b3420 0 3px, #f58a5e 3.5px); }

/* instrument window */
.inst-main { display: flex; margin: 8px 0 0; height: 606px; flex: none; }
.controls { width: 279px; flex: none; display: flex; flex-direction: column; }
.inst-tabs .tab.on { line-height: 29px; }
.inst-tabs .tab { line-height: 25px; }
.x1 { width: 64px; } .x2 { width: 45px; } .x3 { width: 98px; } .x4 { width: 73px; text-align: left; padding-left: 8px; }
.arrows { display: flex; gap: 2px; margin-left: -32px; position: relative; z-index: 2; }
.arr { width: 14px; height: 28px; border: 1px solid #a09e9a; border-radius: 3px; background: linear-gradient(#f2f2f2, #d4d4d4); display: grid; place-items: center; }
.arr i { border: 4px solid transparent; border-left: 5px solid #6b6b67; border-right: 0; }
.arr.off { border-color: #c8c6c2; background: #edecebd0; }
.arr.off i { border-left: 0; border-right: 5px solid #aaa; }
.render { padding: 11px 0 0 11px; display: flex; flex-direction: column; }
.btn { height: 26px; width: 83px; flex: none; display: flex; align-items: center; justify-content: center; border: 1px solid #a9a7a3; border-bottom-color: #8e8c89; border-radius: 4px; background: linear-gradient(#f3f3f3, #d3d3d3 75%, #dadada); }
.menu { padding-right: 21px; position: relative; }
.menu::after { content: ""; position: absolute; right: 6px; top: 10px; border: 4px solid transparent; border-top: 5px solid #6d6d69; border-bottom: 0; }
.wide { width: 255px; margin-bottom: 7px; }
.flip { display: flex; align-items: center; margin-bottom: 7px; padding-left: 2px; }
.flip span { width: 102px; margin: -1px 0 0 8px; }
.flip .check { margin-top: -2px; }
.flip .btn { width: 129px; }
.check { width: 14px; height: 14px; border: 1px solid #9a9894; border-radius: 2px; background: #fff; }
.check.on { border-color: #a85a3c; background: #f5845a; }
.check.on svg { margin: -1px 0 0 -1px; }
.field { width: 58px; height: 26px; flex: none; border: 1px solid #aaa8a4; border-radius: 4px; background: #fff; padding-left: 4px; line-height: 24px; }
.f-max { margin: 9px 0 6px 37px; }
.scale { height: 311px; margin-left: 40px; display: flex; }
.colorbar { width: 20px; background: linear-gradient(#fff 0, #ffff50 18.5%, #ffff00 18.7%, #c86400 46%, #0000ff 82%, #00aaff 100%); }
.nums { margin: 2px 0 0 5px; display: flex; flex-direction: column; }
.nums span { height: 16.39px; line-height: 16.39px; }
.lowrow { display: flex; margin: 7px 0 0 37px; gap: 53px; }
.linear { width: 70px; justify-content: space-between; padding: 0 5px; }
.auto { display: flex; align-items: center; margin: 17px 0 0 2px; gap: 8px; }
.split-v { width: 6px; display: flex; align-items: center; justify-content: center; }
.tof { display: flex; align-items: center; margin: 15px 0 0 9px; height: 28px; }
.tof span { width: 101px; letter-spacing: .2px; }
.tof .field { width: 98px; }
.slider { width: 883px; height: 28px; margin: 0 7px; border: 1px solid #b7b5b1; }
.slider i { width: 107px; height: 26px; border: 1px solid #9b9995; border-radius: 3px; background: linear-gradient(#f3f3f3, #d3d3d3 75%, #dadada); }
.hint { display: flex; align-items: center; justify-content: space-between; height: 26px; margin-top: 15px; }
.help { width: 24px; margin-right: 1px; }

/* right docks */
.docks { width: 280px; display: flex; flex-direction: column; }
.wsbtns { display: grid; grid-template-columns: 83px 83px; gap: 7px 8px; margin: 10px 0 6px 16px; }
.dis { color: #a2a2a0; border-color: #c5c3bf; background: #e9e8e7; }
.tree { background: #fff; border: 1px solid #b9b7b2; flex: none; }
.ws { margin-left: 15px; width: 256px; height: 374px; }
.th { height: 25px; line-height: 25px; padding-left: 4px; border-bottom: 1px solid #aeaca8; background: linear-gradient(#fafafa, #e8e7e6); }
.tr { height: 19px; display: flex; align-items: center; padding-left: 9px; }
.ws .tr { letter-spacing: .2px; }
.tg { margin-right: 7px; }
.gi { margin-right: 6px; }
.blue { color: #7c7cff; }
.white { color: #fff; }
.sel { background: linear-gradient(#ebebe9, #d9d8d5); border-top: 1px solid #d2d1ce; color: #222; }
.dock-split { height: 17px; display: flex; align-items: flex-end; justify-content: center; padding: 0 0 3px 7px; }
.exec { display: flex; gap: 6px; margin: 5px 0 5px 11px; }
.alg-title { margin-top: -2px; }
.combo { width: 175px; height: 26px; border: 1px solid #aaa8a4; border-radius: 4px; background: linear-gradient(90deg, #fff 148px, #aaa8a4 148px 149px, #f1f0ef 149px); position: relative; }
.combo i { position: absolute; right: 6px; top: 11px; border: 4px solid transparent; border-top: 5px solid #6d6d69; border-bottom: 0; }
.alg { margin-left: 10px; width: 266px; height: 446px; }
.alg .tr { padding-left: 9px; }
.details { margin: 4px 0 0 192px; }
```
